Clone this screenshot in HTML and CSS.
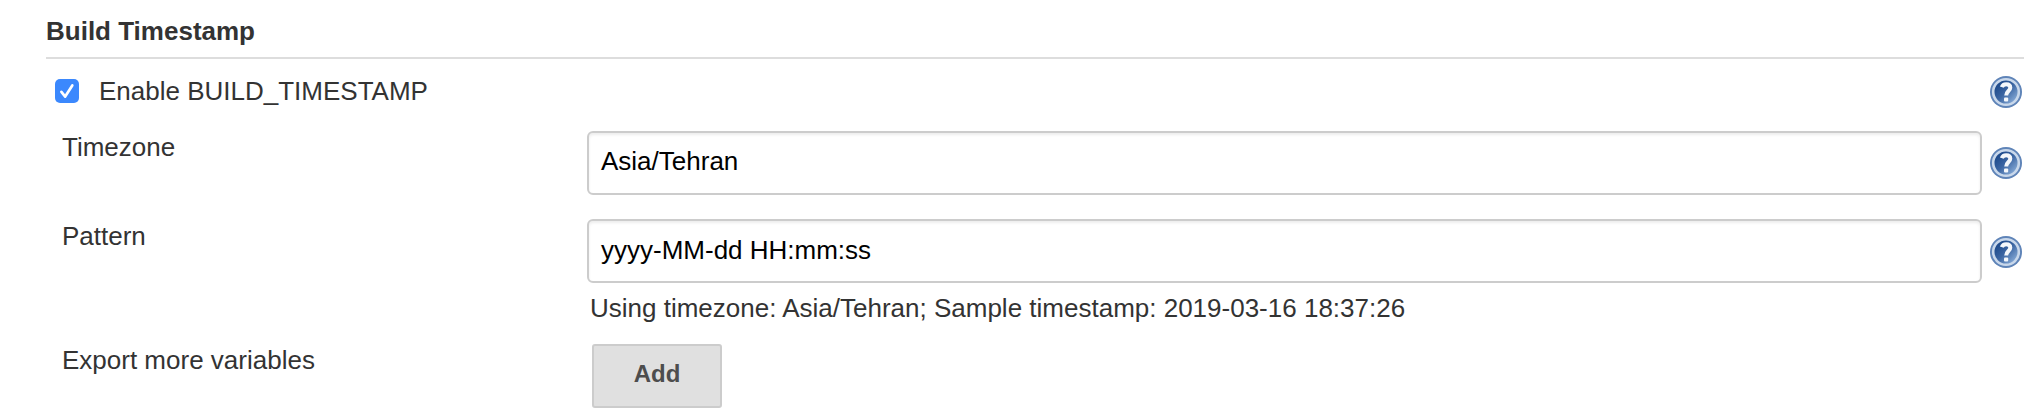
FILE: index.html
```html
<!DOCTYPE html>
<html lang="en">
<head>
<meta charset="utf-8">
<title>Build Timestamp</title>
<link rel="stylesheet" href="styles.css">
</head>
<body>
<svg class="defs" width="0" height="0" aria-hidden="true">
  <defs>
    <linearGradient id="disc" x1="0" y1="0" x2="1" y2="1">
      <stop offset="0.2" stop-color="#1f4b8c"/>
      <stop offset="0.5" stop-color="#3c66a3"/>
      <stop offset="0.9" stop-color="#8fb2dc"/>
    </linearGradient>
    <symbol id="help" viewBox="0 0 32 32">
      <circle cx="16" cy="16" r="16" fill="#5f84b8"/>
      <circle cx="16" cy="16" r="12.8" fill="url(#disc)" stroke="#c9d8eb" stroke-width="2.6"/>
      <path d="M11.8 11.2C12.6 8.9 14.2 8.3 16.2 8.3C18.7 8.3 20.3 9.7 20.3 11.8C20.3 15 16.2 15.2 16.2 19.4" fill="none" stroke="#f4f7fb" stroke-width="4"/>
      <rect x="14" y="21.6" width="4.2" height="4" rx="1" fill="#f4f7fb"/>
    </symbol>
  </defs>
</svg>
<main class="section">
  <h1 class="heading">Build Timestamp</h1>
  <div class="enable">
    <label class="option">
      <span class="checkbox"><svg width="24" height="24" viewBox="0 0 24 24"><path d="M6.4 12.9L10.2 17.6L17.3 6.5" fill="none" stroke="#fff" stroke-width="2.7" stroke-linecap="round" stroke-linejoin="round"/></svg></span>
      <span>Enable BUILD_TIMESTAMP</span>
    </label>
    <svg class="help"><use href="#help"/></svg>
  </div>
  <div class="row">
    <div class="label">Timezone</div>
    <div class="field">Asia/Tehran</div>
    <svg class="help"><use href="#help"/></svg>
  </div>
  <div class="row pattern">
    <div class="label">Pattern</div>
    <div class="field">yyyy-MM-dd HH:mm:ss</div>
    <svg class="help"><use href="#help"/></svg>
  </div>
  <div class="hint">Using timezone: Asia/Tehran; Sample timestamp: 2019-03-16 18:37:26</div>
  <div class="row export">
    <div class="label">Export more variables</div>
    <button class="add" type="button">Add</button>
  </div>
</main>
</body>
</html>
```
FILE: styles.css
```css
* { box-sizing: border-box; }
body {
  margin: 0;
  background: #fff;
  color: #333;
  font: 26px/30px "Liberation Sans", Helvetica, Arial, sans-serif;
  overflow: hidden;
}
.defs { display: block; }
.section { padding-left: 46px; }
.heading {
  margin: 0;
  height: 59px;
  padding: 16px 0 0;
  border-bottom: 2px solid #ddd;
  font-size: 26px;
  font-weight: bold;
}
.enable {
  display: flex;
  justify-content: space-between;
  height: 72px;
  padding: 17px 2px 0 9px;
}
.option { display: flex; gap: 20px; }
.checkbox {
  width: 24px;
  height: 24px;
  margin-top: 3px;
  border-radius: 5px;
  background: #3b88fd;
}
.checkbox svg { display: block; }
.help { display: block; width: 32px; height: 32px; flex: none; }
.row {
  display: grid;
  grid-template-columns: 526px 1395px 40px;
  padding-left: 15px;
}
.row .help { margin: 16px 0 0 8px; }
.pattern { margin-top: 24px; }
.pattern .help { margin-top: 17px; }
.label { padding: 1px 0 0 1px; }
.pattern .label { padding-top: 2px; }
.field {
  height: 64px;
  padding: 13px 12px;
  border: 2px solid #ccc;
  border-radius: 6px;
  box-shadow: inset 0 2px 3px rgba(0, 0, 0, .075);
  color: #000;
}
.pattern .field { padding-top: 14px; }
.hint { padding: 10px 0 0 544px; }
.export { margin-top: 21px; }
.add {
  width: 130px;
  height: 64px;
  margin-left: 5px;
  padding: 0 0 4px;
  border: 2px solid #ccc;
  border-radius: 3px;
  background: #e0e0e0;
  color: #4d4d4d;
  font: bold 24px/28px "Liberation Sans", Helvetica, Arial, sans-serif;
}
```
